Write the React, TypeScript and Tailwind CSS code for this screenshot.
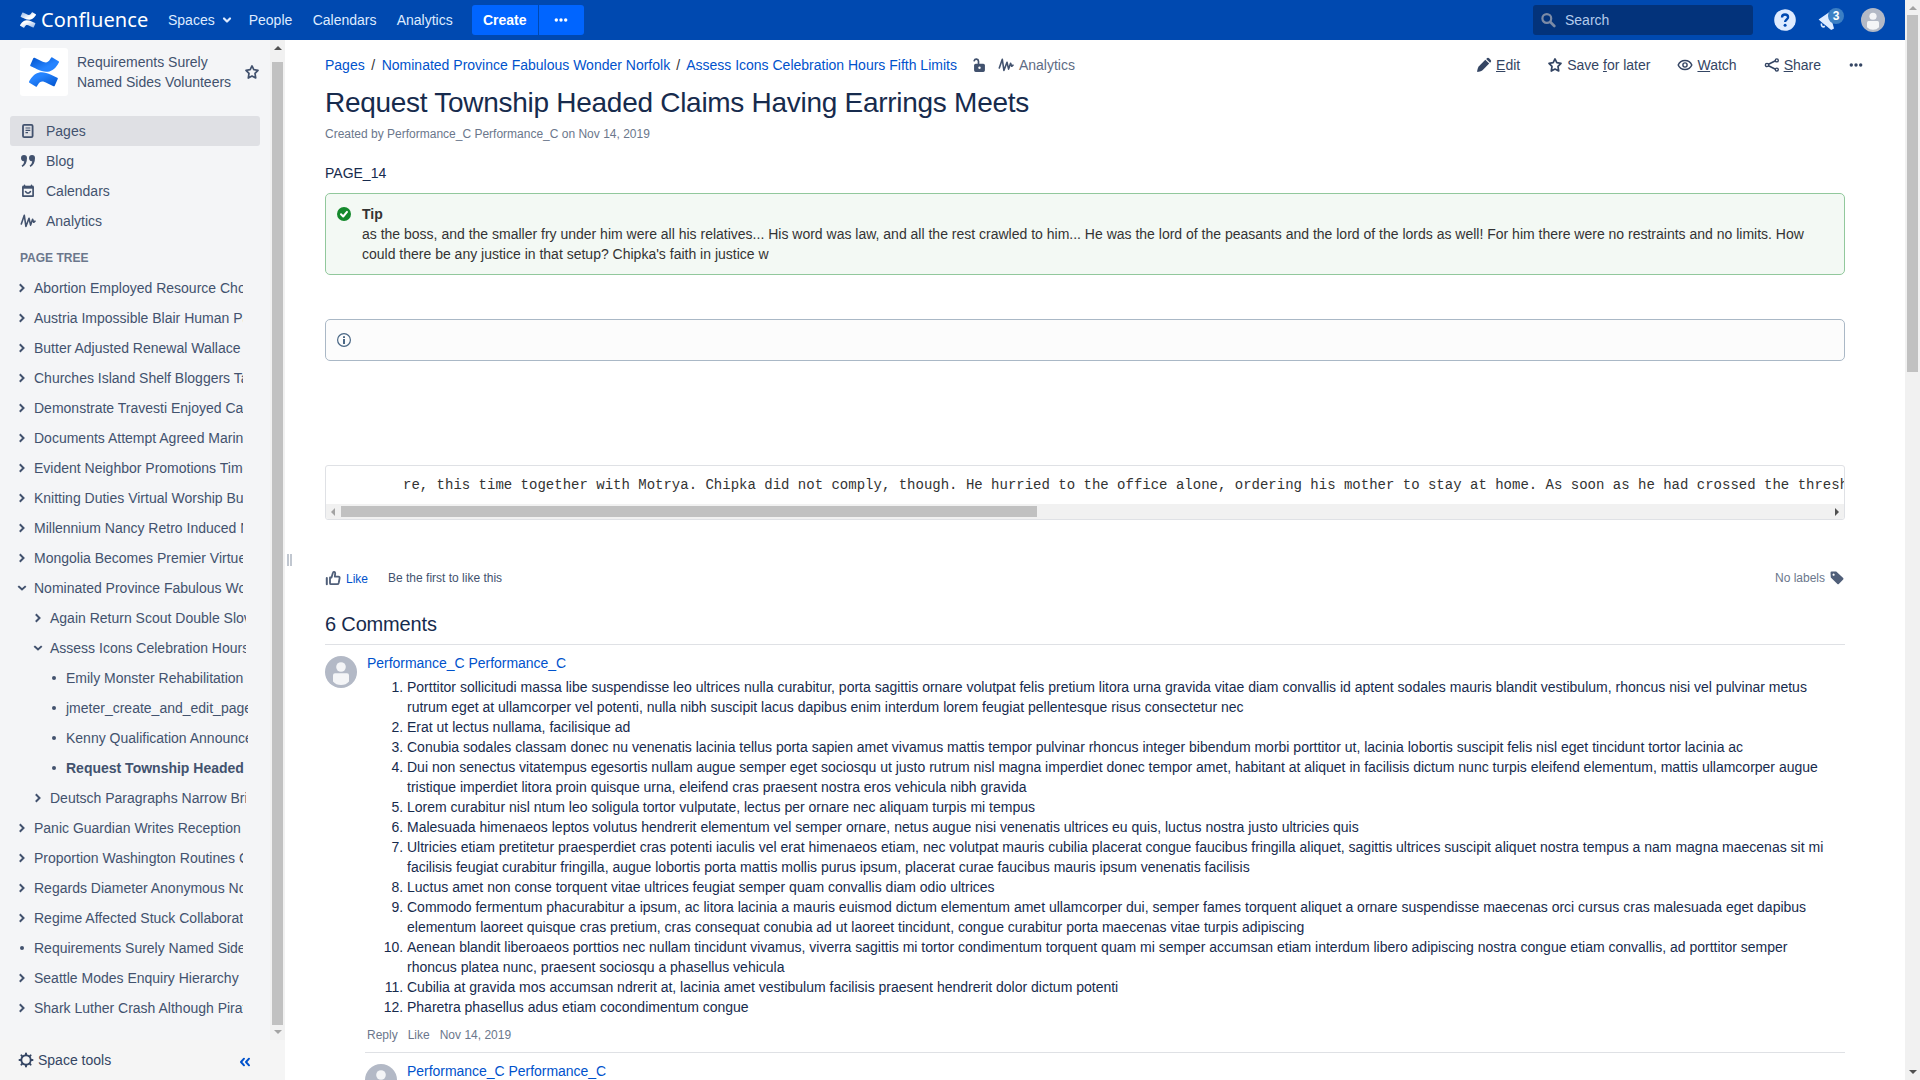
import React from "react";

type Row = { label: string; level: 0 | 1 | 2; kind: "closed" | "open" | "dot"; current?: boolean };

const tree: Row[] = [
  { label: "Abortion Employed Resource Choices", level: 0, kind: "closed" },
  { label: "Austria Impossible Blair Human Pa", level: 0, kind: "closed" },
  { label: "Butter Adjusted Renewal Wallace", level: 0, kind: "closed" },
  { label: "Churches Island Shelf Bloggers Tax", level: 0, kind: "closed" },
  { label: "Demonstrate Travesti Enjoyed Car", level: 0, kind: "closed" },
  { label: "Documents Attempt Agreed Marine", level: 0, kind: "closed" },
  { label: "Evident Neighbor Promotions Time", level: 0, kind: "closed" },
  { label: "Knitting Duties Virtual Worship Bus", level: 0, kind: "closed" },
  { label: "Millennium Nancy Retro Induced Next", level: 0, kind: "closed" },
  { label: "Mongolia Becomes Premier Virtues", level: 0, kind: "closed" },
  { label: "Nominated Province Fabulous Wonder", level: 0, kind: "open" },
  { label: "Again Return Scout Double Slovak", level: 1, kind: "closed" },
  { label: "Assess Icons Celebration Hours Fifth", level: 1, kind: "open" },
  { label: "Emily Monster Rehabilitation", level: 2, kind: "dot" },
  { label: "jmeter_create_and_edit_pages", level: 2, kind: "dot" },
  { label: "Kenny Qualification Announced", level: 2, kind: "dot" },
  { label: "Request Township Headed", level: 2, kind: "dot", current: true },
  { label: "Deutsch Paragraphs Narrow Brief", level: 1, kind: "closed" },
  { label: "Panic Guardian Writes Reception", level: 0, kind: "closed" },
  { label: "Proportion Washington Routines Car", level: 0, kind: "closed" },
  { label: "Regards Diameter Anonymous Nor", level: 0, kind: "closed" },
  { label: "Regime Affected Stuck Collaborate", level: 0, kind: "closed" },
  { label: "Requirements Surely Named Sides", level: 0, kind: "dot" },
  { label: "Seattle Modes Enquiry Hierarchy", level: 0, kind: "closed" },
  { label: "Shark Luther Crash Although Pirate", level: 0, kind: "closed" },
];

const comment = [
  "Porttitor sollicitudi massa libe suspendisse leo ultrices nulla curabitur, porta sagittis ornare volutpat felis pretium litora urna gravida vitae diam convallis id aptent sodales mauris blandit vestibulum, rhoncus nisi vel pulvinar metus rutrum eget at ullamcorper vel potenti, nulla nibh suscipit lacus dapibus enim interdum lorem feugiat pellentesque risus consectetur nec",
  "Erat ut lectus nullama, facilisique ad",
  "Conubia sodales classam donec nu venenatis lacinia tellus porta sapien amet vivamus mattis tempor pulvinar rhoncus integer bibendum morbi porttitor ut, lacinia lobortis suscipit felis nisl eget tincidunt tortor lacinia ac",
  "Dui non senectus vitatempus egesortis nullam augue semper eget sociosqu ut justo rutrum nisl magna imperdiet donec tempor amet, habitant at aliquet in facilisis dictum nunc turpis eleifend elementum, mattis ullamcorper augue tristique imperdiet litora proin quisque urna, eleifend cras praesent nostra eros vehicula nibh gravida",
  "Lorem curabitur nisl ntum leo soligula tortor vulputate, lectus per ornare nec aliquam turpis mi tempus",
  "Malesuada himenaeos leptos volutus hendrerit elementum vel semper ornare, netus augue nisi venenatis ultrices eu quis, luctus nostra justo ultricies quis",
  "Ultricies etiam pretitetur praesperdiet cras potenti iaculis vel erat himenaeos etiam, nec volutpat mauris cubilia placerat congue faucibus fringilla aliquet, sagittis ultrices suscipit aliquet nostra tempus a nam magna maecenas sit mi facilisis feugiat curabitur fringilla, augue lobortis porta mattis mollis purus ipsum, placerat curae faucibus mauris ipsum venenatis facilisis",
  "Luctus amet non conse torquent vitae ultrices feugiat semper quam convallis diam odio ultrices",
  "Commodo fermentum phacurabitur a ipsum, ac litora lacinia a mauris euismod dictum elementum amet ullamcorper dui, semper fames torquent aliquet a ornare suspendisse maecenas orci cursus cras malesuada eget dapibus elementum laoreet quisque cras pretium, cras consequat conubia ad ut laoreet tincidunt, congue curabitur porta maecenas vitae turpis adipiscing",
  "Aenean blandit liberoaeos porttios nec nullam tincidunt vivamus, viverra sagittis mi tortor condimentum torquent quam mi semper accumsan etiam interdum libero adipiscing nostra congue etiam convallis, ad porttitor semper rhoncus platea nunc, praesent sociosqu a phasellus vehicula",
  "Cubilia at gravida mos accumsan ndrerit at, lacinia amet vestibulum facilisis praesent hendrerit dolor dictum potenti",
  "Pharetra phasellus adus etiam cocondimentum congue",
];

const Logo = ({ id, size, a, b, className = "" }: { id: string; size: number; a: string; b: string; className?: string }) => (
  <svg width={size} height={size} viewBox="0 0 24 24" className={className}>
    <defs>
      <linearGradient id={id + "1"} x1="1" y1="1" x2="0.35" y2="0.3">
        <stop offset="0" stopColor={a} />
        <stop offset="1" stopColor={b} />
      </linearGradient>
      <linearGradient id={id + "2"} x1="0" y1="0" x2="0.65" y2="0.6">
        <stop offset="0" stopColor={a} />
        <stop offset="1" stopColor={b} />
      </linearGradient>
    </defs>
    <path fill={`url(#${id}1)`} d="M.87 18.257c-.248.382-.53.875-.763 1.245a.764.764 0 0 0 .255 1.04l4.965 3.054a.764.764 0 0 0 1.058-.26c.199-.332.454-.763.733-1.221 1.967-3.247 3.945-2.853 7.508-1.146l4.957 2.337a.764.764 0 0 0 1.028-.382l2.364-5.346a.764.764 0 0 0-.382-1 599.851 599.851 0 0 1-4.965-2.361C10.911 10.97 5.224 11.185.87 18.257z" />
    <path fill={`url(#${id}2)`} d="M23.131 5.743c.249-.405.531-.875.764-1.25a.764.764 0 0 0-.256-1.034L18.675.404a.764.764 0 0 0-1.058.26c-.195.335-.451.763-.734 1.225-1.966 3.246-3.945 2.85-7.508 1.146L4.437.694a.764.764 0 0 0-1.027.382L1.046 6.422a.764.764 0 0 0 .382 1c1.039.49 3.105 1.467 4.965 2.361 6.698 3.246 12.392 3.029 16.738-4.04z" />
  </svg>
);

const Icon = ({ children, className = "" }: { children: React.ReactNode; className?: string }) => (
  <svg width="16" height="16" viewBox="0 0 16 16" fill="none" stroke="currentColor" strokeWidth="1.8" strokeLinejoin="round" strokeLinecap="round" className={"shrink-0 " + className}>
    {children}
  </svg>
);

const Star = ({ className = "" }: { className?: string }) => (
  <Icon className={className}>
    <path strokeWidth="1.700" d="M8 1.900l1.800 3.800 4.200.6-3 3 .7 4.700L8 12l-3.700 2 .7-4.700-3-3 4.200-.6z" />
  </Icon>
);

const Wave = ({ className = "" }: { className?: string }) => (
  <Icon className={className}>
    <path strokeWidth="1.600" d="M1.300 11L4.300 2.300 5.900 13.500 9 5.300l1.600 6.800L12.600 6.300l1.100 3L15 8.200" />
  </Icon>
);

const Dots = () => (
  <Icon>
    <g fill="currentColor" stroke="none">
      <circle cx="3.300" cy="8" r="1.700" />
      <circle cx="8" cy="8" r="1.700" />
      <circle cx="12.700" cy="8" r="1.700" />
    </g>
  </Icon>
);

const Avatar = ({ size }: { size: number }) => (
  <svg width={size} height={size} viewBox="0 0 32 32" className="shrink-0">
    <circle cx="16" cy="16" r="16" fill="#b3b9c6" />
    <circle cx="16" cy="11" r="4.800" fill="#f4f5f7" />
    <path d="M8 19.300q0-2 2-2h12q2 0 2 2v6.200q-3 3.500-8 3.500t-8-3.500z" fill="#f4f5f7" />
  </svg>
);

const marker = {
  closed: <path d="M6.500 5l3 3-3 3" strokeWidth="2" strokeLinecap="square" strokeLinejoin="miter" />,
  open: <path d="M5 6.800l3 2.700 3-2.700" strokeWidth="2" strokeLinecap="square" strokeLinejoin="miter" />,
  dot: <circle cx="8" cy="8" r="2" fill="currentColor" stroke="none" />,
};

const pads = ["pl-[14px] w-[243px]", "pl-[30px] w-[246px]", "pl-[46px] w-[248px]"];

const SideLink = ({ icon, label, active }: { icon: React.ReactNode; label: string; active?: boolean }) => (
  <div className={"ml-[10px] flex h-[30px] w-[250px] items-center gap-[10px] rounded-[3px] pl-[10px] " + (active ? "bg-[#dfe0e4]" : "")}>
    {icon}
    <span>{label}</span>
  </div>
);

const Action = ({ icon, children }: { icon: React.ReactNode; children: React.ReactNode }) => (
  <div className="flex items-center gap-1">
    {icon}
    <span>{children}</span>
  </div>
);

export default function App() {
  return (
    <div className="flex h-[1080px] w-[1920px] overflow-hidden bg-white font-['Liberation_Sans',Arial,sans-serif] text-[14px] leading-5 text-[#172b4d]">
      <div className="flex w-[1905px] shrink-0 flex-col">
        <header className="flex h-10 shrink-0 items-center bg-[#0049b0] text-[#deebff]">
          <Logo id="top" size={16} a="#8fb3e6" b="#ffffff" className="ml-5" />
          <span className="ml-[5px] w-[127px] font-['Noto_Sans',sans-serif] text-[20px] leading-10 tracking-[0.15px] text-white">Confluence</span>
          <span>Spaces</span>
          <Icon className="ml-1">
            <path d="M5 6.500l3 3 3-3" strokeWidth="2.200" />
          </Icon>
          <span className="ml-[14px] w-[64px]">People</span>
          <span className="w-[84px]">Calendars</span>
          <span className="w-[75px]">Analytics</span>
          <div className="flex h-[30px] gap-px overflow-hidden rounded-[3px] font-bold text-white">
            <div className="flex w-[66px] items-center justify-center bg-[#0065ff]">Create</div>
            <div className="flex w-[45px] items-center justify-center bg-[#0065ff]"><Dots /></div>
          </div>
          <div className="ml-auto flex h-[30px] w-[220px] items-center gap-2 rounded-[3px] bg-[#03337b] pl-[7px] text-[#b3cbec]">
            <Icon className="text-[#7c8ba6]">
              <circle cx="6.800" cy="6.500" r="4.400" strokeWidth="2.200" />
              <path d="M10.300 10l4 4" strokeWidth="2.600" />
            </Icon>
            <span className="ml-px">Search</span>
          </div>
          <svg width="22" height="22" viewBox="0 0 22 22" className="ml-[21px]">
            <circle cx="11" cy="11" r="10.800" fill="#deebff" />
            <path d="M8 8.500c0-2 1.300-3 3-3s3.100 1 3.100 2.800c0 2.200-3 2.200-3 4.700" fill="none" stroke="#0049b0" strokeWidth="2.300" />
            <circle cx="11.100" cy="16.200" r="1.500" fill="#0049b0" />
          </svg>
          <div className="relative ml-[22px] h-6 w-[26px]">
            <svg width="26" height="24" viewBox="0 0 26 24">
              <path d="M.6 11.600L11.500 4l4.500 16.500-2.800 1.500-4.200-3.600L4 14.600z" fill="#deebff" />
              <path d="M3.600 15.500c-1 2.500 1.200 4.200 3.200 2.800" fill="none" stroke="#deebff" strokeWidth="1.700" />
            </svg>
            <span className="absolute left-[10px] top-0 flex h-4 w-4 items-center justify-center rounded-full bg-[#3b7fc4] text-[12px] font-bold leading-4 text-white">3</span>
          </div>
          <div className="ml-[17px] mr-5"><Avatar size={24} /></div>
        </header>

        <div className="flex min-h-0 flex-1">
          <aside className="flex w-[285px] shrink-0 flex-col bg-[#f4f5f7] text-[#42526e]">
            <div className="flex h-[1000px]">
              <div className="w-[270px]">
                <div className="ml-5 mt-2 flex h-12 items-center">
                  <div className="flex h-12 w-12 items-center justify-center rounded-[3px] bg-white">
                    <Logo id="space" size={30} a="#0052cc" b="#2684ff" />
                  </div>
                  <div className="ml-[9px] w-[167px]">Requirements Surely<br />Named Sides Volunteers</div>
                  <Star />
                </div>
                <nav className="mt-5">
                  <SideLink active label="Pages" icon={<Icon><rect x="3" y="1.900" width="9.600" height="12.200" rx="1.200" /><path d="M5.500 5h4.800M5.500 7.300h4.800M5.500 9.600h2.500" strokeWidth="1.200" strokeLinecap="butt" /></Icon>} />
                  <SideLink label="Blog" icon={<Icon><g fill="currentColor" stroke="none"><path d="M1 5a3 3 0 1 1 6 0c0 4-1.500 7.500-4.600 8.900L1.600 12.500C3.200 11.500 4 10 4.200 8.200 2.200 8.500 1 7 1 5z" /><path d="M9 5a3 3 0 1 1 6 0c0 4-1.500 7.500-4.600 8.900L9.600 12.500c1.600-1 2.400-2.500 2.600-4.300C10.200 8.500 9 7 9 5z" /></g></Icon>} />
                  <SideLink label="Calendars" icon={<Icon><path d="M2.900 4h10.200v9.100H2.900z" strokeWidth="1.700" /><path d="M2.500 4.200h11" strokeWidth="3" strokeLinecap="butt" /><path d="M4.500 2.200v1M11.500 2.200v1M5.500 8.500q2.500 3.500 5 0" strokeWidth="1.500" /></Icon>} />
                  <SideLink label="Analytics" icon={<Wave />} />
                </nav>
                <div className="ml-5 mt-[12px] h-[25px] text-[12px] font-bold text-[#6b778c]">PAGE TREE</div>
                {tree.map((r) => (
                  <div key={r.label} className={"flex h-[30px] items-center gap-[4px] overflow-hidden whitespace-nowrap " + pads[r.level]}>
                    <Icon>{marker[r.kind]}</Icon>
                    <span className={r.current ? "font-bold" : ""}>{r.label}</span>
                  </div>
                ))}
              </div>
              <div className="flex w-[15px] flex-col items-center bg-[#f1f1f1] pt-[6px]">
                <div className="h-0 w-0 border-x-4 border-b-4 border-x-transparent border-b-[#505050]" />
                <div className="mt-3 h-[963px] w-[11px] bg-[#c1c1c1]" />
                <div className="mt-[5px] h-0 w-0 border-x-4 border-t-4 border-x-transparent border-t-[#a3a3a3]" />
              </div>
            </div>
            <div className="flex h-10 items-center bg-[#f5f5f5] pl-[18px] text-[#344563]">
              <Icon>
                <circle cx="8" cy="8" r="4.700" strokeWidth="1.900" />
                <path d="M8 1.500v1M8 13.500v1M1.500 8h1M13.500 8h1M3.400 3.400l.7.7M11.900 11.900l.7.7M3.400 12.600l.7-.7M11.900 4.100l.7-.7" strokeWidth="2" />
              </Icon>
              <span className="ml-1">Space tools</span>
              <Icon className="ml-auto mr-[32px] mt-1 text-[#0052cc]">
                <path d="M7 4.700L4 8l3 3.300M12 4.700L9 8l3 3.300" strokeWidth="2" />
              </Icon>
            </div>
          </aside>
          <div className="ml-[2px] flex w-[38px] shrink-0 gap-px pt-[514px]">
            <div className="h-[12px] w-[2px] bg-[#c1c7d0]" />
            <div className="h-[12px] w-[2px] bg-[#c1c7d0]" />
          </div>

          <main className="flex w-[1580px] shrink-0 flex-col pr-[60px]">
            <div className="-mr-5 flex h-[50px] shrink-0 items-center pr-px text-[#0052cc]">
              <span>Pages</span>
              <span className="w-[17px] text-center text-[#333333]">/</span>
              <span>Nominated Province Fabulous Wonder Norfolk</span>
              <span className="w-[16px] text-center text-[#333333]">/</span>
              <span>Assess Icons Celebration Hours Fifth Limits</span>
              <Icon className="ml-[14px] text-[#42526e]">
                <rect x="3.700" y="7.300" width="9.600" height="7" rx="1" fill="currentColor" stroke="currentColor" strokeWidth="1.200" />
                <path d="M7.500 6.500V4.200A2.200 2.200 0 0 0 3.200 3.700" strokeWidth="1.700" />
                <circle cx="8.500" cy="10.700" r="1.200" fill="#fff" stroke="none" />
              </Icon>
              <Wave className="ml-[11px] text-[#42526e]" />
              <span className="ml-[5px] text-[#5e6c84]">Analytics</span>
              <div className="ml-auto flex items-center gap-[27px] text-[#344563]">
                <Action icon={<Icon><g fill="currentColor" stroke="none"><path d="M9.300 2.700l3.900 3.900-6.700 6.700c-1.500 1.200-3.500 1.700-5.300 1.700 0-1.800.4-3.800 1.500-5.500z" /><path d="M10.200 1.900l1-.8q1-.7 1.900.2l1.600 1.600q.9 1 .1 2l-.8.900z" /></g></Icon>}><u className="underline-offset-1">E</u>dit</Action>
                <Action icon={<Star />}>Save <u className="underline-offset-1">f</u>or later</Action>
                <Action icon={<Icon><path d="M1.200 8C2.500 5 5 3.500 8 3.500S13.500 5 14.800 8c-1.300 3-3.800 4.500-6.800 4.500S2.500 11 1.200 8z" strokeWidth="1.500" /><circle cx="8" cy="8" r="2.100" strokeWidth="1.400" /></Icon>}><u className="underline-offset-1">W</u>atch</Action>
                <Action icon={<Icon><path d="M4.500 7.300L11 4M4.500 8.700L11 12" strokeWidth="1.600" /><circle cx="3" cy="8" r="1.600" fill="#fff" strokeWidth="1.400" /><circle cx="12.800" cy="3.400" r="1.500" fill="#fff" strokeWidth="1.400" /><circle cx="12.800" cy="12.600" r="1.500" fill="#fff" strokeWidth="1.400" /></Icon>}><u className="underline-offset-1">S</u>hare</Action>
                <Dots />
              </div>
            </div>
            <h1 className="h-[34px] shrink-0 text-[28px] leading-[26px] tracking-[-0.28px]">Request Township Headed Claims Having Earrings Meets</h1>
            <div className="shrink-0 text-[12px] leading-5 text-[#6b778c]">Created by Performance_C Performance_C on Nov 14, 2019</div>
            <p className="mt-[19px] shrink-0">PAGE_14</p>

            <div className="mt-[10px] flex h-[82px] shrink-0 rounded-[5px] border border-[#91c89c] bg-[#f3f9f4] pt-[10px] pl-[10px] text-[#333333]">
              <svg width="16" height="16" viewBox="0 0 16 16" className="mr-[10px] mt-[2px] shrink-0">
                <circle cx="8" cy="8" r="7" fill="#14892c" />
                <path d="M5 8.300l2.200 2.200L11 5.900" fill="none" stroke="#fff" strokeWidth="2" strokeLinecap="round" strokeLinejoin="round" />
              </svg>
              <div className="w-[1456px]">
                <b>Tip</b>
                <p>as the boss, and the smaller fry under him were all his relatives... His word was law, and all the rest crawled to him... He was the lord of the peasants and the lord of the lords as well! For him there were no restraints and no limits. How could there be any justice in that setup? Chipka's faith in justice w</p>
              </div>
            </div>

            <div className="mt-[44px] flex h-[42px] shrink-0 items-center rounded-[5px] border border-[#aab8c6] bg-[#fcfcfc] pl-[10px]">
              <svg width="16" height="16" viewBox="0 0 16 16">
                <circle cx="8" cy="8" r="6.400" fill="none" stroke="#4a6785" strokeWidth="1.200" />
                <path d="M7 7h2v5H7zM7 4.300h2v1.600H7z" fill="#4a6785" />
              </svg>
            </div>

            <div className="mt-[104px] flex h-[55px] shrink-0 flex-col overflow-hidden rounded-[3px] border border-[#dfe1e5]">
              <pre className="h-[38px] shrink-0 pl-[77px] pt-[9px] font-['Liberation_Mono',monospace] text-[14px] leading-5 text-[#333333]">re, this time together with Motrya. Chipka did not comply, though. He hurried to the office alone, ordering his mother to stay at home. As soon as he had crossed the threshold of</pre>
              <div className="flex h-[15px] shrink-0 items-center bg-[#f1f1f1] pl-[5px] pr-[5px]">
                <div className="h-0 w-0 border-y-4 border-r-4 border-y-transparent border-r-[#a3a3a3]" />
                <div className="ml-[6px] h-[11px] w-[696px] bg-[#c1c1c1]" />
                <div className="ml-auto h-0 w-0 border-y-4 border-l-4 border-y-transparent border-l-[#505050]" />
              </div>
            </div>

            <div className="mt-[48px] flex h-5 shrink-0 items-center text-[12px] leading-5">
              <Icon className="text-[#505f79]">
                <path d="M5 7.500h1.500L8 2.500c.2-1 2.300-.8 2.200.8L9.800 6.700h3.600q1.500.1 1.200 1.600l-.9 4.700q-.3 1.200-1.500 1.200H6q-1 0-1-1z" strokeWidth="1.800" />
                <path d="M1.800 8v6.300" strokeWidth="2" />
              </Icon>
              <span className="ml-[5px] mt-[2px] text-[#0052cc]">Like</span>
              <span className="ml-[20px] text-[#42526e]">Be the first to like this</span>
              <span className="ml-auto mr-[5px] text-[#6b778c]">No labels</span>
              <svg width="14" height="14" viewBox="0 0 14 14" className="mr-[1px]">
                <path fillRule="evenodd" fill="#505f79" d="M1.500.6h4.700l7 6.400q.6.700 0 1.400l-4.400 4.600q-.7.600-1.400 0L.8 6.400.5 1.700q0-1 1-1.100zM3.600 2.600a1.100 1.100 0 1 0 .01 0z" />
              </svg>
            </div>

            <h2 className="mt-[25px] h-[32px] shrink-0 border-b border-[#dfe1e5] text-[20px] leading-[23px] tracking-[-0.16px]">6 Comments</h2>

            <div className="mt-[11px] flex shrink-0">
              <Avatar size={32} />
              <div className="ml-[10px] flex-1">
                <div className="-mt-[3px] tracking-[-0.03px] text-[#0052cc]">Performance_C Performance_C</div>
                <ol className="mt-1 list-decimal pl-10 pr-[10px]">
                  {comment.map((c) => <li key={c}>{c}</li>)}
                </ol>
                <div className="mt-2 flex gap-[10px] text-[12px] leading-5 text-[#6b778c]">
                  <span>Reply</span><span>Like</span><span>Nov 14, 2019</span>
                </div>
              </div>
            </div>
            <div className="ml-10 mt-[7px] flex shrink-0 border-t border-[#dfe1e5] pt-[11px]">
              <Avatar size={32} />
              <span className="-mt-[3px] ml-[10px] tracking-[-0.03px] text-[#0052cc]">Performance_C Performance_C</span>
            </div>
          </main>
        </div>
      </div>

      <div className="flex w-[15px] shrink-0 flex-col items-center bg-[#f1f1f1] pt-[6px]">
        <div className="h-0 w-0 border-x-4 border-b-4 border-x-transparent border-b-[#a3a3a3]" />
        <div className="mt-[5px] h-[357px] w-[11px] bg-[#c1c1c1]" />
        <div className="mb-[6px] mt-auto h-0 w-0 border-x-4 border-t-4 border-x-transparent border-t-[#505050]" />
      </div>
    </div>
  );
}
